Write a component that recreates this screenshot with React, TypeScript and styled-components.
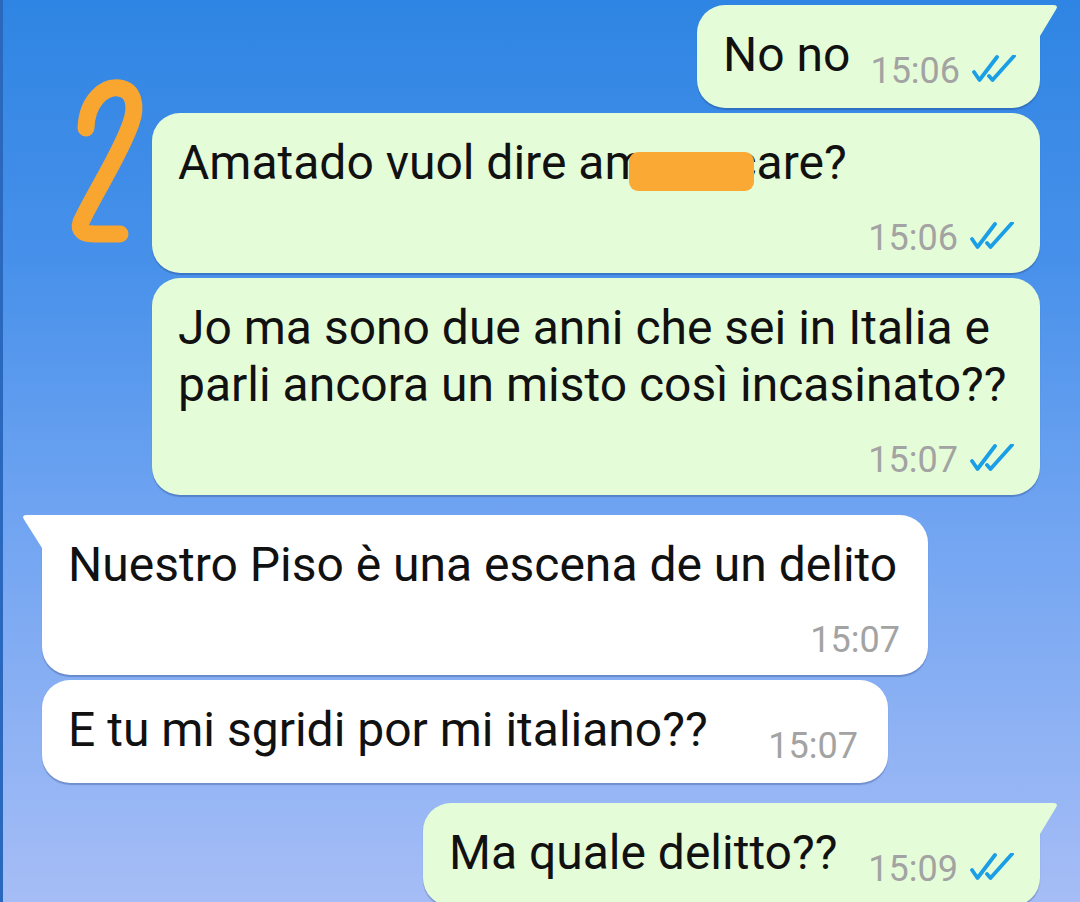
import React from 'react';
import styled, { createGlobalStyle, css } from 'styled-components';

const GlobalStyle = createGlobalStyle`
  html, body {
    margin: 0;
    padding: 0;
  }
  body {
    font-family: Roboto, "Noto Sans", "Liberation Sans", sans-serif;
    -webkit-font-smoothing: antialiased;
  }
`;

const Screen = styled.div`
  position: relative;
  width: 1080px;
  height: 902px;
  overflow: hidden;
  box-sizing: border-box;
  padding-top: 5px;
  display: flex;
  flex-direction: column;
  gap: 20px;
  background: linear-gradient(180deg, #2f85e3 0%, #4690ea 28%, #6ea3f1 56%, #a6bdf6 100%);
  box-shadow: inset 3px 0 0 #2a68bd;
`;

const Group = styled.div<{ $out: boolean }>`
  display: flex;
  flex-direction: column;
  gap: 5px;
  align-items: ${(p) => (p.$out ? 'flex-end' : 'flex-start')};
  padding: ${(p) => (p.$out ? '0 40px 0 0' : '0 0 0 42px')};
`;

const Bubble = styled.div<{ $out: boolean; $tail?: boolean; $w: number; $pr: number }>`
  position: relative;
  box-sizing: border-box;
  width: ${(p) => p.$w}px;
  padding: 21px ${(p) => p.$pr}px 15px 26px;
  border-radius: 28px;
  background: ${(p) => (p.$out ? '#e5fcd8' : '#ffffff')};
  box-shadow: 0 1.5px 1px rgba(20, 45, 100, 0.28);
  color: #111111;

  ${(p) =>
    p.$tail &&
    (p.$out
      ? css`
          border-top-right-radius: 0;
          &::after {
            content: '';
            position: absolute;
            top: 0;
            right: -19px;
            width: 22px;
            height: 32px;
            background: #e5fcd8;
            clip-path: path('M0 0 H16 Q22 0 19 4.5 L3 31 H0 Z');
          }
        `
      : css`
          border-top-left-radius: 0;
          &::after {
            content: '';
            position: absolute;
            top: 0;
            left: -21px;
            width: 24px;
            height: 34px;
            background: #ffffff;
            clip-path: path('M24 0 H6 Q0 0 3 4.5 L21 33 H24 Z');
          }
        `)}
`;

const Row = styled.div`
  display: flex;
  align-items: flex-start;
`;

const Text = styled.div<{ $single?: boolean }>`
  font-size: 48px;
  line-height: 57px;
  white-space: ${(p) => (p.$single ? 'nowrap' : 'normal')};
`;

const Meta = styled.div<{ $inline?: boolean }>`
  display: flex;
  align-items: baseline;
  justify-content: flex-end;
  margin: ${(p) => (p.$inline ? '25px 0 2px auto' : '27px 0 0 0')};
  padding-left: ${(p) => (p.$inline ? '20px' : '0')};
  font-size: 36px;
  line-height: 40px;
  color: #a2a3a2;
  white-space: nowrap;
`;

const Ticks = styled.svg`
  margin-left: 12px;
  flex-shrink: 0;
`;

const Redacted = styled.span`
  position: relative;
  z-index: 1;
  display: inline-block;
  width: 125px;
  height: 39px;
  margin: 0 -23px 0 -17px;
  border-radius: 9px;
  background: #fba935;
  vertical-align: -12px;
`;

const Annotation = styled.svg`
  position: absolute;
  left: 0;
  top: 0;
  z-index: 2;
  pointer-events: none;
`;

function DoubleTick() {
  return (
    <Ticks width="44" height="28" viewBox="0 0 44 28" fill="none">
      <path d="M2 17 L7.5 25 L25 2" stroke="#1a9ee6" strokeWidth="3.8" strokeLinecap="round" strokeLinejoin="round" />
      <path d="M17 21 L20.5 25 L42 1" stroke="#1a9ee6" strokeWidth="3.8" strokeLinecap="round" strokeLinejoin="round" />
    </Ticks>
  );
}

type Msg = {
  text: React.ReactNode;
  time: string;
  w: number;
  pr?: number;
  inline?: boolean;
  tail?: boolean;
  single?: boolean;
};

function Message({ m, out }: { m: Msg; out: boolean }) {
  const meta = (
    <Meta $inline={m.inline}>
      {m.time}
      {out && <DoubleTick />}
    </Meta>
  );
  return (
    <Bubble $out={out} $tail={m.tail} $w={m.w} $pr={m.pr ?? 26}>
      {m.inline ? (
        <Row>
          <Text $single>{m.text}</Text>
          {meta}
        </Row>
      ) : (
        <>
          <Text $single={m.single}>{m.text}</Text>
          {meta}
        </>
      )}
    </Bubble>
  );
}

const first: Msg[] = [
  { text: 'No no', time: '15:06', w: 343, inline: true, tail: true },
  {
    text: (
      <>
        Amatado vuol dire am<Redacted />care?
      </>
    ),
    time: '15:06',
    w: 888,
    single: true,
  },
  { text: 'Jo ma sono due anni che sei in Italia e parli ancora un misto così incasinato??', time: '15:07', w: 888 },
];

const second: Msg[] = [
  { text: 'Nuestro Piso è una escena de un delito', time: '15:07', w: 886, pr: 28, tail: true, single: true },
  { text: 'E tu mi sgridi por mi italiano??', time: '15:07', w: 846, pr: 30, inline: true },
];

const third: Msg[] = [{ text: 'Ma quale delitto??', time: '15:09', w: 617, inline: true, tail: true }];

export default function App() {
  return (
    <>
      <GlobalStyle />
      <Screen>
        <Group $out>
          {first.map((m, i) => (
            <Message key={i} m={m} out />
          ))}
        </Group>
        <Group $out={false}>
          {second.map((m, i) => (
            <Message key={i} m={m} out={false} />
          ))}
        </Group>
        <Group $out>
          {third.map((m, i) => (
            <Message key={i} m={m} out />
          ))}
        </Group>
        <Annotation width="160" height="260" viewBox="0 0 160 260">
          <path
            d="M86 128 C87 101 104 86 119 88 C134 90 137 106 131 123 C120 155 96 190 81 222 C78 231 84 234 95 234 L120 234"
            stroke="#f8a62f"
            strokeWidth="17"
            strokeLinecap="round"
            strokeLinejoin="round"
            fill="none"
          />
        </Annotation>
      </Screen>
    </>
  );
}
